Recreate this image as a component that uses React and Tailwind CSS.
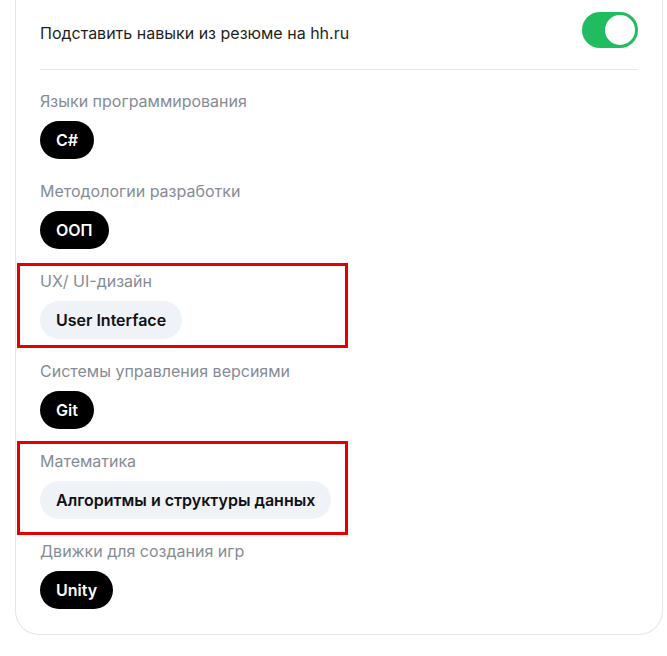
const groups = [
  { title: "Языки программирования", skill: "C#", dark: true },
  { title: "Методологии разработки", skill: "ООП", dark: true },
  { title: "UX/ UI-дизайн", skill: "User Interface", dark: false },
  { title: "Системы управления версиями", skill: "Git", dark: true },
  { title: "Математика", skill: "Алгоритмы и структуры данных", dark: false },
  { title: "Движки для создания игр", skill: "Unity", dark: true },
];

const SkillChip = ({ skill, dark }) => (
  <span
    className={`inline-flex h-[38px] items-center rounded-full px-4 text-base font-semibold ${
      dark ? "bg-black text-white" : "bg-[#eff2f7] text-[#111]"
    }`}
  >
    {skill}
  </span>
);

const App = () => {
  return (
    <div
      className="relative h-[656px] w-[667px] overflow-hidden bg-white"
      style={{ fontFamily: "Inter, 'Noto Sans', sans-serif" }}
    >
      <div className="ml-[15px] w-[648px] rounded-b-[24px] border border-t-0 border-[#e3e5e8] px-6 pb-[25px]">
        <div className="flex items-start justify-between pt-3">
          <span className="mt-[9px] text-base leading-6 text-[#1f1f1f]">
            Подставить навыки из резюме на hh.ru
          </span>
          <div className="flex h-9 w-14 items-center justify-end rounded-full bg-[#1fbd5f] px-[3px]">
            <div className="h-[30px] w-[30px] rounded-full bg-white" />
          </div>
        </div>
        <div className="mt-[21px] h-px bg-[#e6e8eb]" />
        <div className="flex flex-col gap-5 pt-[19px]">
          {groups.map((group) => (
            <div key={group.title} className="flex flex-col items-start gap-2">
              <span className="text-base leading-6 text-[#868c96]">
                {group.title}
              </span>
              <SkillChip skill={group.skill} dark={group.dark} />
            </div>
          ))}
        </div>
      </div>
      <div className="absolute left-[17px] top-[263px] h-[85px] w-[331px] border-[3px] border-[#e30000]" />
      <div className="absolute left-[17px] top-[441px] h-[94px] w-[331px] border-[3px] border-[#e30000]" />
    </div>
  );
};

export default App;
